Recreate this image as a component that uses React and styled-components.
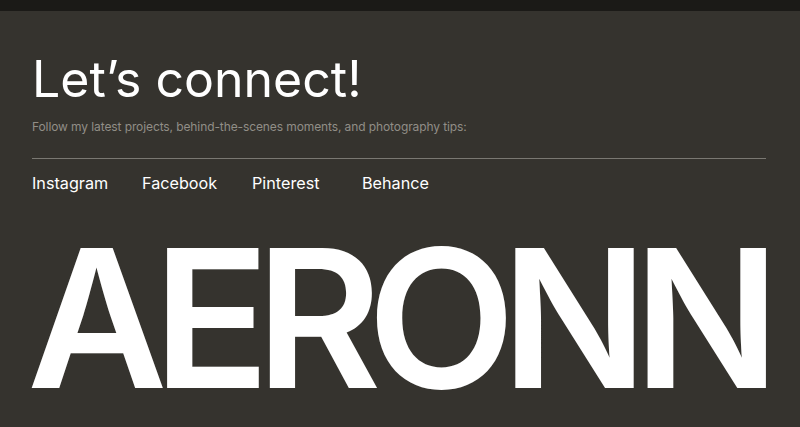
import styled, { createGlobalStyle } from "styled-components"

const GlobalStyle = createGlobalStyle`
    html, body {
        margin: 0;
        padding: 0;
        background: #35332e;
        overflow: hidden;
    }
    body {
        font-family: Inter, "Noto Sans", sans-serif;
        color: #ffffff;
    }
`;

const TopBar = styled.div`
    height: 11px;
    background: #1b1a17;
`;

const Section = styled.section`
    padding: 38px 34px 0 32px;
`;

const Heading = styled.h1`
    margin: 0;
    font-size: 50px;
    font-weight: 400;
    line-height: 60px;
`;

const Subtitle = styled.p`
    margin: 10px 0 0;
    font-size: 12px;
    line-height: 16px;
    color: #918e87;
    letter-spacing: -0.1px;
`;

const Divider = styled.hr`
    margin: 23px 0 0;
    border: 0;
    border-top: 1px solid #7a7872;
`;

const Links = styled.nav`
    display: grid;
    grid-template-columns: repeat(4, 110px);
    margin-top: 13px;
`;

const SocialLink = styled.a`
    font-size: 16.2px;
    line-height: 22px;
    color: #ffffff;
    text-decoration: none;
`;

const Brand = styled.div`
    margin: 34px 0 0 -5px;
    font-size: 193px;
    font-weight: 600;
    line-height: 180px;
    letter-spacing: -14.3px;
    white-space: nowrap;
`;

const links = ["Instagram", "Facebook", "Pinterest", "Behance"];

const App = () => {
    return <>
        <GlobalStyle />
        <TopBar />
        <Section>
            <Heading>Let’s connect!</Heading>
            <Subtitle>Follow my latest projects, behind-the-scenes moments, and photography tips:</Subtitle>
            <Divider />
            <Links>
                {links.map(name => <SocialLink href="#" key={name}>{name}</SocialLink>)}
            </Links>
            <Brand>AERONN</Brand>
        </Section>
    </>
}

export default App
